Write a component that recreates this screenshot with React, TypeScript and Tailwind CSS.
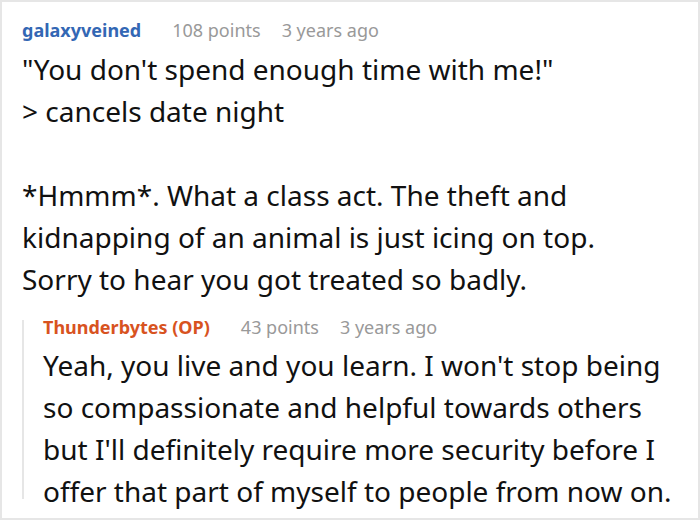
import React from "react";

const font = { fontFamily: '"Noto Sans", "Open Sans", sans-serif' };

type MetaProps = { name: string; color: string; points: string; time: string };

const Meta = ({ name, color, points, time }: MetaProps) => (
  <div className="flex items-center text-[18px] leading-[27px]">
    <span className={`font-bold ${color}`}>{name}</span>
    <span className="ml-[31px] text-[#999]">{points}</span>
    <span className="ml-[21px] text-[#999]">{time}</span>
  </div>
);

const App = () => {
  return (
    <div style={font} className="w-[700px] h-[520px] bg-white border-2 border-[#e6e6e6] overflow-hidden">
      <div className="pl-[20px] pt-[14.5px] pr-[18px]">
        <Meta name="galaxyveined" color="text-[#3367b4]" points="108 points" time="3 years ago" />
        <div className="mt-[4px] text-[28px] leading-[42px] text-[#111]">
          "You don't spend enough time with me!"
          <br />
          &gt; cancels date night
          <br />
          <br />
          *Hmmm*. What a class act. The theft and kidnapping of an animal is just icing on top.
          <br />
          Sorry to hear you got treated so badly.
        </div>

        <div className="mt-[14px] flex">
          {/* thread line */}
          <div className="w-[2px] shrink-0 bg-[#e6e6e6] mt-[6px] mb-[13px]" />
          <div className="pl-[19px]">
            <Meta name="Thunderbytes (OP)" color="text-[#d8531f]" points="43 points" time="3 years ago" />
            <div className="mt-[3px] text-[28px] leading-[42px] text-[#111]">
              Yeah, you live and you learn. I won't stop being so compassionate and helpful towards others
              but I'll definitely require more security before I offer that part of myself to people from now on.
            </div>
          </div>
        </div>
      </div>
    </div>
  );
};

export default App;
